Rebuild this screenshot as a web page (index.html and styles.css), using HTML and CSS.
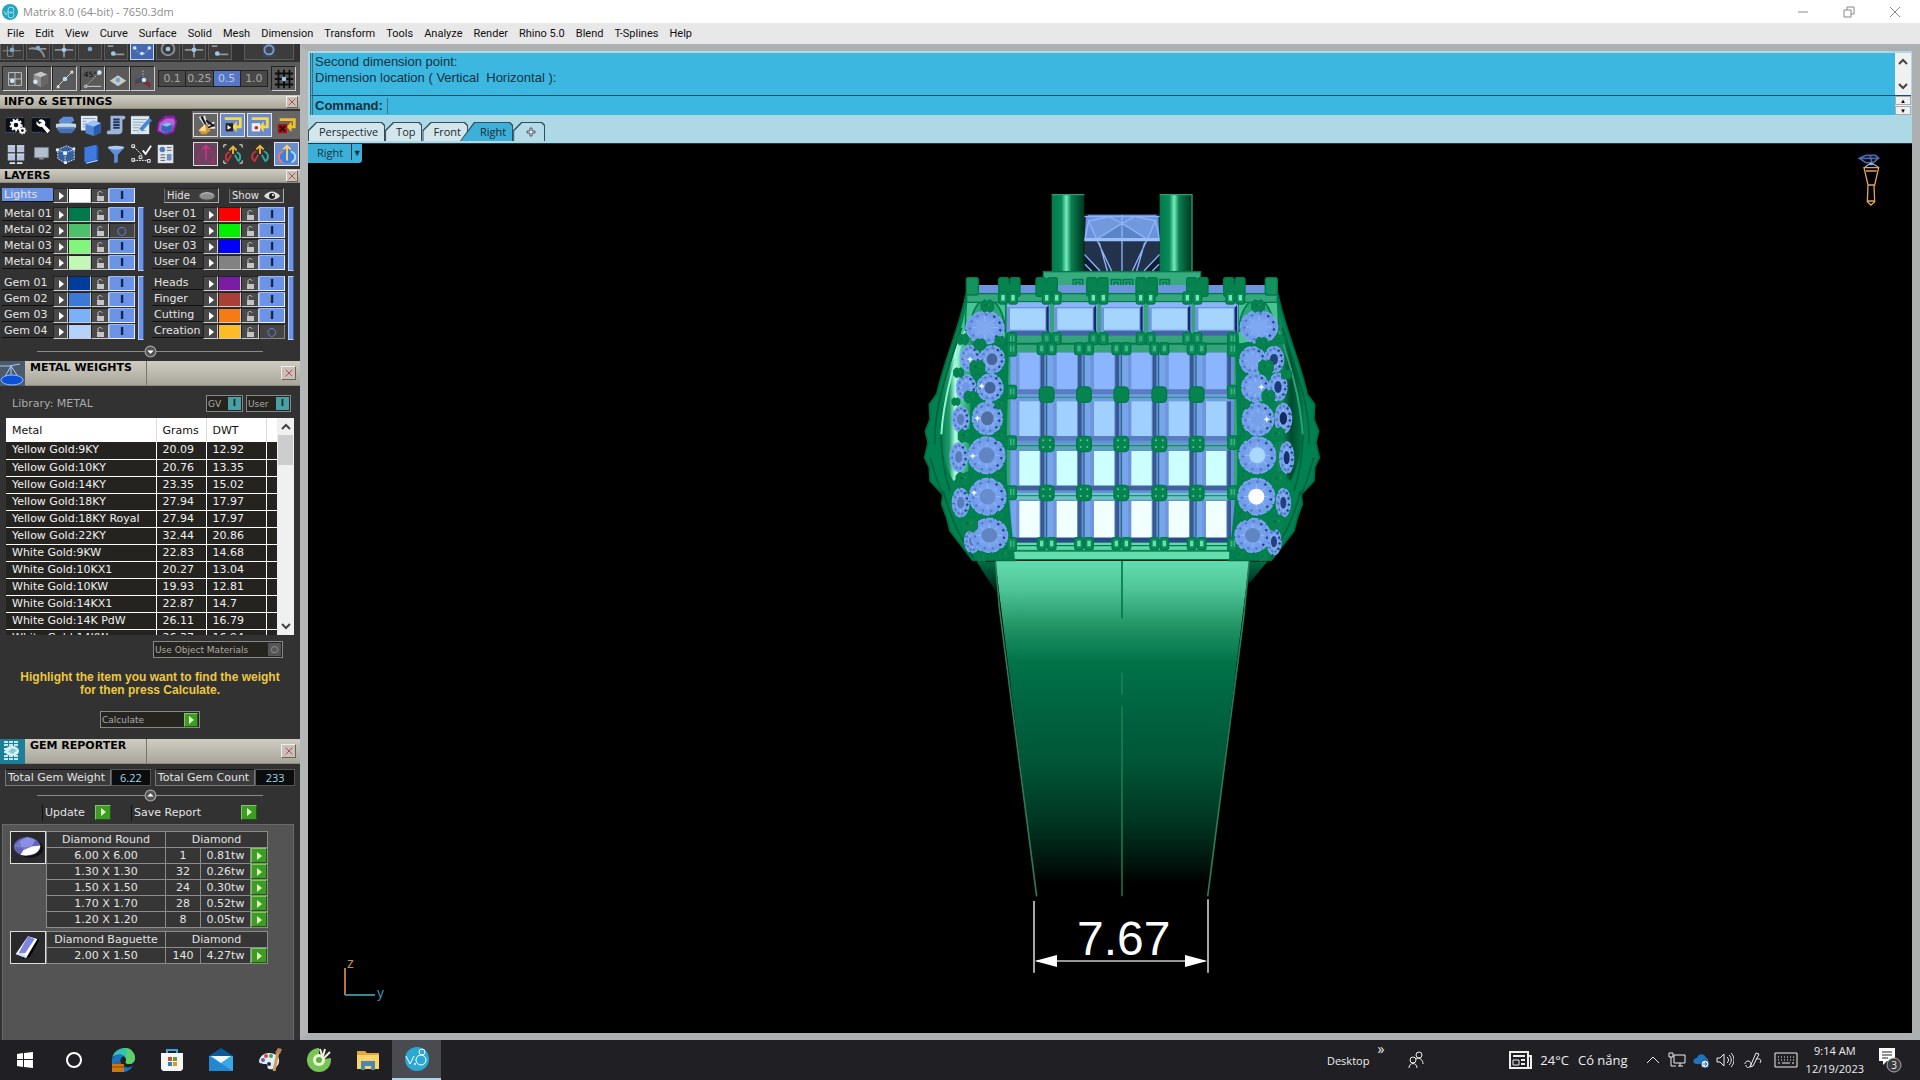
FILE: index.html
```html
<!DOCTYPE html>
<html lang="en">
<head>
    <meta charset="UTF-8">
    <meta name="viewport" content="width=device-width, initial-scale=1">
    <title>Matrix 8.0 (64-bit) - 7650.3dm</title>
    <link rel="stylesheet" href="styles.css">
</head>
<body>

<!-- icon sprite -->
<svg class="sprite" aria-hidden="true">
    <symbol id="i-grid4" viewBox="0 0 24 24"><path d="M5 5h14v14H5zM12 5v14M5 12h14" fill="none" stroke="#c9c9c9"/><circle cx="9" cy="14" r="2.5" fill="#cde6f7"/></symbol>
    <symbol id="i-box" viewBox="0 0 24 24"><path d="M5 7l8-3 7 3v10l-7 4-8-4z" fill="#8d8d8d"/><path d="M5 7l8-3 7 3-7 3z" fill="#c5c5c5"/><path d="M13 10l7-3v10l-7 4z" fill="#666"/><circle cx="7" cy="15" r="2.5" fill="#cde6f7"/></symbol>
    <symbol id="i-line" viewBox="0 0 24 24"><path d="M4 20L20 4" stroke="#ddd"/><path d="M3 19h3v3H3zM18 3h3v3h-3z" fill="#ddd"/><circle cx="12" cy="12" r="2.5" fill="#b8dcf4"/></symbol>
    <symbol id="i-plane" viewBox="0 0 24 24"><path d="M3 14l9-6 9 6-9 6z" fill="#c9cac4"/><circle cx="12" cy="13" r="2.5" fill="#6aa6d4"/></symbol>
    <symbol id="i-planes" viewBox="0 0 24 24"><path d="M12 3v10" stroke="#fff" stroke-dasharray="1 2"/><path d="M13 13l7 3v6l-8-6zM4 13l8-2v4l-9 3z" fill="#7c2f34"/><path d="M3 13l9-4 3 4-10 3z" fill="#384a6c"/><circle cx="13" cy="13" r="2.5" fill="#cde6f7"/></symbol>
    <symbol id="i-hash" viewBox="0 0 24 24"><path d="M6 2v20M12 2v20M18 2v20M2 6h20M2 12h20M2 18h20" stroke="#0c0c0c" stroke-width="2"/><circle cx="12" cy="12" r="2.5" fill="#9ccbe8"/></symbol>

    <symbol id="i-s1" viewBox="0 0 24 24"><path d="M2 15h20M7 10v11h6V4" fill="none" stroke="#8f9296"/><circle cx="12" cy="14" r="2.5" fill="#7fa9c9"/></symbol>
    <symbol id="i-s2" viewBox="0 0 24 24"><path d="M2 13c9-3 15 2 17 9M7 13h14" fill="none" stroke="#8f9296" stroke-width="2"/><circle cx="12" cy="12" r="2.5" fill="#7fa9c9"/></symbol>
    <symbol id="i-s3" viewBox="0 0 24 24"><path d="M2 14h20M12 3v19" stroke="#8f9296" stroke-width="2"/><circle cx="12" cy="14" r="2.5" fill="#9ccbe8"/></symbol>
    <symbol id="i-s4" viewBox="0 0 24 24"><circle cx="12" cy="13" r="2.5" fill="#7fa9c9"/></symbol>
    <symbol id="i-s5" viewBox="0 0 24 24"><path d="M3 10h6M7 19h14" stroke="#8f9296" stroke-width="2"/><circle cx="9" cy="18" r="2.5" fill="#9ccbe8"/></symbol>
    <symbol id="i-s6" viewBox="0 0 24 24"><path d="M4 10c4 12 12 12 16 0" fill="none" stroke="#cfe0ff" stroke-dasharray="1 2"/><circle cx="4" cy="12" r="2" fill="#cde6f7"/><circle cx="12" cy="18" r="2" fill="#cde6f7"/><circle cx="20" cy="12" r="2" fill="#cde6f7"/></symbol>
    <symbol id="i-s7" viewBox="0 0 24 24"><circle cx="12" cy="13" r="7" fill="none" stroke="#8f9296" stroke-width="2"/><circle cx="12" cy="13" r="2.5" fill="#9ccbe8"/></symbol>
    <symbol id="i-s8" viewBox="0 0 24 24"><path d="M5 2h14v20H5z" fill="#3c4654"/><circle cx="12" cy="14" r="5" fill="none" stroke="#7c9cd4" stroke-width="2"/></symbol>

    <symbol id="i-gears" viewBox="0 0 24 24"><path d="M1 4h20v16H1z" fill="#0a0d14"/><path d="M1 4h20M1 20h12" stroke="#5b7fc9" stroke-dasharray="1 1"/><circle cx="12" cy="12" r="4" fill="none" stroke="#fff" stroke-width="3"/><circle cx="12" cy="12" r="6" fill="none" stroke="#fff" stroke-width="2" stroke-dasharray="2 2"/><circle cx="19" cy="18" r="2.5" fill="none" stroke="#fff" stroke-width="2"/><circle cx="19" cy="18" r="4" fill="none" stroke="#fff" stroke-dasharray="1 2"/></symbol>
    <symbol id="i-wrench" viewBox="0 0 24 24"><path d="M2 4h20v16H2z" fill="#0a0d14"/><path d="M2 4h20M2 20h12" stroke="#5b7fc9" stroke-dasharray="1 1"/><path d="M9 8a4 4 0 0 1 7 4l6 6-3 3-6-7a5 5 0 0 1-6-6l3 3 3-2z" fill="#fff"/></symbol>
    <symbol id="i-layers" viewBox="0 0 24 24"><path d="M4 7l5-4h10l2 4-4 3H5z" fill="#5f8fd8"/><path d="M2 17l4-4h13l3 4-4 4H6z" fill="#4470b5"/><path d="M1 11l5-1h12l5 1v4H1z" fill="#c7d7ec"/><path d="M2 14h20v2H2z" fill="#6b8db8"/></symbol>
    <symbol id="i-cubedoc" viewBox="0 0 24 24"><path d="M1 2h18v16H1z" fill="#dfe9f5"/><path d="M3 5h14M3 8h4M3 11h3M3 14h3" stroke="#7c98c2"/><path d="M6 11l9-4 8 3v10l-8 4-9-3z" fill="#4f86d8"/><path d="M6 11l9-4 8 3-8 4z" fill="#9cc4f5"/><path d="M15 14l8-4v10l-8 4z" fill="#2c5cae"/></symbol>
    <symbol id="i-scroll" viewBox="0 0 24 24"><path d="M6 2h14c3 0 3 4 0 4h-1v12c0 3-2 4-4 4H3c-2-1-1-4 1-4h2z" fill="#9fb4da"/><path d="M9 6h7M9 9h7M9 12h7M9 15h7" stroke="#20355f" stroke-width="2"/></symbol>
    <symbol id="i-note" viewBox="0 0 24 24"><path d="M1 2h20v20H1z" fill="#dce9f2"/><path d="M3 6h15M3 9h13M3 12h9M3 15h7M3 18h14" stroke="#8ba0b5"/><path d="M1 2h20" stroke="#333" stroke-dasharray="1 1"/><path d="M21 4l3 3-11 12-5 2 2-5z" fill="#4d86d0"/><path d="M10 16l3 3-5 2z" fill="#f0e6cf"/></symbol>
    <symbol id="i-gem" viewBox="0 0 24 24"><path d="M3 9l8-7h10l3 6-3 12-9 3-10-4z" fill="#8d1fa8"/><path d="M5 10l7-5h8l2 4-3 9-8 3-7-3z" fill="#b763d4"/><path d="M7 12l6-3 6 2v6l-6 4-6-3z" fill="#3567b9"/><path d="M7 12l6-3 6 2-6 3z" fill="#8bb9f0"/></symbol>
    <symbol id="i-quad" viewBox="0 0 24 24"><path d="M3 3h8v7H3zM13 3h8v7h-8zM3 12h8v7H3zM13 12h8v7h-8z" fill="#b4c4dc"/><path d="M3 3h8M13 3h8M3 12h8M13 12h8" stroke="#f2f6ff"/><path d="M5 22h6M13 22h6" stroke="#dfe6f2" stroke-width="2"/></symbol>
    <symbol id="i-monitor" viewBox="0 0 24 24"><path d="M5 5h15v11H5z" fill="#b4bfce" stroke="#7d8794"/><path d="M10 16h5v2h-5z" fill="#8b93a0"/></symbol>
    <symbol id="i-cubewire" viewBox="0 0 24 24"><path d="M3 7l10-4 8 4v11l-10 4-8-5z" fill="#35619e"/><path d="M3 7l10-4 8 4v11l-10 4-8-5zM3 7l8 4 10-4M11 11v11" fill="none" stroke="#dce8ff" stroke-dasharray="2 1"/><path d="M9 9h4v4H9zM1 6h3v3H1zM19 5h3v3h-3zM10 20h3v3h-3z" fill="#e9f1ff"/></symbol>
    <symbol id="i-book" viewBox="0 0 24 24"><path d="M5 5l13-3 2 2v16l-13 3-2-2z" fill="#2458b5"/><path d="M5 5l13-3v16L5 21z" fill="#3f7ae0"/><path d="M7 22l12-3" stroke="#e8f0ff"/></symbol>
    <symbol id="i-funnel" viewBox="0 0 24 24"><path d="M3 5h18l-7 8v8l-4 1v-9z" fill="#5d8fd6"/><ellipse cx="12" cy="5" rx="9" ry="2" fill="#a9c8f2"/></symbol>
    <symbol id="i-nodes" viewBox="0 0 24 24"><path d="M4 4l9 9M4 19h15" fill="none" stroke="#fff" stroke-dasharray="2 1"/><path d="M2 2h3v3H2zM2 17h3v3H2zM19 18h3v3h-3zM10 14h3v3h-3z" fill="none" stroke="#fff"/><path d="M14 8l3 4 6-9" fill="none" stroke="#fff" stroke-width="2"/></symbol>
    <symbol id="i-report" viewBox="0 0 24 24"><path d="M3 2h17v20H3z" fill="#dfe6ee"/><circle cx="8" cy="7" r="3" fill="#4d79b8"/><path d="M13 5h5M13 8h5M6 13h5M6 16h5M6 19h5" stroke="#556"/><path d="M13 12h5v7h-5z" fill="#6e8fc0"/></symbol>
    <symbol id="i-burst" viewBox="0 0 24 24"><path d="M5 3l6 9M10 2l3 10M21 9l-7 5M22 15l-8 0" stroke="#e8e8e8" stroke-width="2"/><path d="M7 3l5 9M12 7l7 5M21 12l-7 3" stroke="#111" stroke-width="2"/><path d="M4 18l7-7 6 7-5 4H7z" fill="#dc9430"/><path d="M4 18l7-7 1 8z" fill="#ffe0a0"/></symbol>
    <symbol id="i-play" viewBox="0 0 24 24"><path d="M3 5h17v9h-5" fill="none" stroke="#f5d94b" stroke-width="3"/><path d="M16 8v12l-5-6z" fill="#f5d94b"/><path d="M4 10h8v9H4z" fill="#222"/><path d="M6 12v5l4-2z" fill="#fff"/></symbol>
    <symbol id="i-rec" viewBox="0 0 24 24"><path d="M3 5h17v9h-5" fill="none" stroke="#f5d94b" stroke-width="3"/><path d="M16 8v12l-5-6z" fill="#f5d94b"/><path d="M3 10h9v9H3z" fill="#eee"/><circle cx="8" cy="15" r="2" fill="#c22"/></symbol>
    <symbol id="i-stop" viewBox="0 0 24 24"><path d="M4 6h16v8h-4" fill="none" stroke="#f1c21f" stroke-width="3"/><path d="M17 8v12l-5-6z" fill="#f1c21f"/><path d="M2 11h10v10H2z" fill="#a11"/><path d="M4 13l6 6M10 13l-6 6" stroke="#300" stroke-width="2"/></symbol>
    <symbol id="i-orbit1" viewBox="0 0 24 24"><path d="M12 19V4M8 7l4-4 4 4" fill="none" stroke="#c8327a" stroke-width="2"/><path d="M9 9c-7 2-7 10-2 13M15 9c7 2 7 9 3 12M20 16v6h-5" fill="none" stroke="#b82b60"/></symbol>
    <symbol id="i-orbit2" viewBox="0 0 24 24"><path d="M2 5V2h3M19 2h3v3M2 19v3h3M19 22h3v-3" fill="none" stroke="#fff"/><path d="M12 12V4M8 8l4-4 4 4" fill="none" stroke="#f0b63c" stroke-width="2"/><path d="M8 10c-5 2-5 8-1 10M10 13l-4 7" fill="none" stroke="#c8323e" stroke-width="2"/><path d="M16 10c5 2 5 8 1 10M14 13l4 7" fill="none" stroke="#29b0a6" stroke-width="2"/></symbol>
    <symbol id="i-orbit3" viewBox="0 0 24 24"><path d="M12 12V4M8 7l4-4 4 4" fill="none" stroke="#f0b63c" stroke-width="2"/><path d="M8 9c-6 2-6 9-1 11M10 13l-4 7" fill="none" stroke="#c8323e" stroke-width="2"/><path d="M16 9c6 2 6 9 1 11M14 13l4 7" fill="none" stroke="#29b0a6" stroke-width="2"/></symbol>
    <symbol id="i-orbit4" viewBox="0 0 24 24"><circle cx="12" cy="14" r="8" fill="#3d7fe0"/><path d="M12 19V4M8 7l4-4 4 4" fill="none" stroke="#ffd36a" stroke-width="2"/><path d="M8 9c-7 3-6 10-1 12" fill="none" stroke="#ef7a6c" stroke-width="2"/><path d="M16 9c7 3 6 10 1 12" fill="none" stroke="#a7e6ff" stroke-width="2"/></symbol>

    <symbol id="i-lock" viewBox="0 0 12 12"><path d="M3 6h7v5H3z" fill="#c4c4c4"/><path d="M4 6V3c0-2 4-2 4 0" fill="none" stroke="#c4c4c4"/></symbol>
    <symbol id="i-close" viewBox="0 0 12 12"><path d="M2 2l8 8M10 2l-8 8" stroke="#a23d3d"/></symbol>
    <symbol id="i-tri" viewBox="0 0 12 12"><path d="M4 2l5 4-5 4z" fill="currentColor"/></symbol>
    <symbol id="i-up" viewBox="0 0 12 12"><path d="M2 8l4-4 4 4" fill="none" stroke="#444" stroke-width="2"/></symbol>
    <symbol id="i-down" viewBox="0 0 12 12"><path d="M2 4l4 4 4-4" fill="none" stroke="#444" stroke-width="2"/></symbol>
</svg>

<div class="window">
    <header class="titlebar">
        <svg class="app-icon" viewBox="0 0 16 16"><circle cx="8" cy="8" r="8" fill="#27a3bd"/><circle cx="9" cy="6" r="3" fill="none" stroke="#8fe0ee"/><circle cx="9" cy="11" r="3" fill="none" stroke="#8fe0ee"/><path d="M2 7l2 4 2-4" fill="none" stroke="#8fe0ee"/></svg>
        <span class="title">Matrix 8.0 (64-bit) - 7650.3dm</span>
        <button class="win-btn" aria-label="Minimize"><svg viewBox="0 0 12 12"><path d="M1 6h10" stroke="#888"/></svg></button>
        <button class="win-btn" aria-label="Restore"><svg viewBox="0 0 12 12"><path d="M1 4h7v7H1zM4 4V1h7v7H8" fill="none" stroke="#888"/></svg></button>
        <button class="win-btn" aria-label="Close"><svg viewBox="0 0 12 12"><path d="M1 1l10 10M11 1L1 11" stroke="#888"/></svg></button>
    </header>

    <nav class="menubar">
        <a href="#">File</a><a href="#">Edit</a><a href="#">View</a><a href="#">Curve</a><a href="#">Surface</a><a href="#">Solid</a><a href="#">Mesh</a><a href="#">Dimension</a><a href="#">Transform</a><a href="#">Tools</a><a href="#">Analyze</a><a href="#">Render</a><a href="#">Rhino 5.0</a><a href="#">Blend</a><a href="#">T-Splines</a><a href="#">Help</a>
    </nav>

    <div class="workspace">
        <aside class="sidebar">
            <div class="snaps">
                <button aria-label="Snap end"><svg><use href="#i-s1"/></svg></button>
                <button aria-label="Snap near"><svg><use href="#i-s2"/></svg></button>
                <button aria-label="Snap intersection"><svg><use href="#i-s3"/></svg></button>
                <button aria-label="Snap point"><svg><use href="#i-s4"/></svg></button>
                <button aria-label="Snap perpendicular"><svg><use href="#i-s5"/></svg></button>
                <button class="on" aria-label="Snap quad"><svg><use href="#i-s6"/></svg></button>
                <button aria-label="Snap center"><svg><use href="#i-s7"/></svg></button>
                <button aria-label="Snap mid"><svg><use href="#i-s3"/></svg></button>
                <button aria-label="Snap tangent"><svg><use href="#i-s5"/></svg></button>
                <button class="wide" aria-label="Disable snaps"><svg><use href="#i-s8"/></svg></button>
            </div>
            <div class="modes">
                <div class="mode-set">
                    <button aria-label="Grid snap"><svg><use href="#i-grid4"/></svg></button>
                    <button aria-label="Object snap"><svg><use href="#i-box"/></svg></button>
                    <button aria-label="Smart track"><svg><use href="#i-line"/></svg></button>
                </div>
                <div class="mode-set">
                    <button aria-label="Ortho"><svg viewBox="0 0 24 24"><path d="M4 20L19 5" stroke="#fff" stroke-dasharray="1 2"/><path d="M5 20h16" stroke="#ddd"/><circle cx="4" cy="20" r="1.5" fill="none" stroke="#ddd"/><circle cx="19" cy="5" r="2.5" fill="#cde6f7"/><text x="2" y="10" class="icon-text">45°</text></svg></button>
                    <button aria-label="Planar"><svg><use href="#i-plane"/></svg></button>
                    <button aria-label="Project"><svg><use href="#i-planes"/></svg></button>
                </div>
                <div class="steps">
                    <button>0.1</button><button>0.25</button><button class="on">0.5</button><button>1.0</button>
                </div>
                <div class="mode-set">
                    <button aria-label="Show grid"><svg><use href="#i-hash"/></svg></button>
                </div>
            </div>

            <div class="head"><h2>INFO &amp; SETTINGS</h2><button class="x" aria-label="Close"><svg><use href="#i-close"/></svg></button></div>
            <div class="tools">
                <div class="tool-row">
                    <button aria-label="Settings"><svg><use href="#i-gears"/></svg></button>
                    <button aria-label="Tools"><svg><use href="#i-wrench"/></svg></button>
                    <button aria-label="Layers"><svg><use href="#i-layers"/></svg></button>
                    <button aria-label="Object info"><svg><use href="#i-cubedoc"/></svg></button>
                    <button aria-label="History"><svg><use href="#i-scroll"/></svg></button>
                    <button aria-label="Notes"><svg><use href="#i-note"/></svg></button>
                    <button aria-label="Gem info"><svg><use href="#i-gem"/></svg></button>
                    <div class="tool-set lit">
                        <button class="raised" aria-label="Explode"><svg><use href="#i-burst"/></svg></button>
                        <button class="blue" aria-label="Play"><svg><use href="#i-play"/></svg></button>
                        <button class="blue" aria-label="Record"><svg><use href="#i-rec"/></svg></button>
                        <button aria-label="Clear"><svg><use href="#i-stop"/></svg></button>
                    </div>
                </div>
                <div class="tool-row">
                    <button aria-label="Four views"><svg><use href="#i-quad"/></svg></button>
                    <button aria-label="Display"><svg><use href="#i-monitor"/></svg></button>
                    <button aria-label="Bounding box"><svg><use href="#i-cubewire"/></svg></button>
                    <button aria-label="Library"><svg><use href="#i-book"/></svg></button>
                    <button aria-label="Filter"><svg><use href="#i-funnel"/></svg></button>
                    <button aria-label="Check"><svg><use href="#i-nodes"/></svg></button>
                    <button aria-label="Report"><svg><use href="#i-report"/></svg></button>
                    <div class="tool-set">
                        <button class="raised rose" aria-label="Gumball"><svg><use href="#i-orbit1"/></svg></button>
                        <button aria-label="Gumball box"><svg><use href="#i-orbit2"/></svg></button>
                        <button aria-label="Gumball free"><svg><use href="#i-orbit3"/></svg></button>
                        <button class="raised blue" aria-label="Gumball world"><svg><use href="#i-orbit4"/></svg></button>
                    </div>
                </div>
            </div>

            <div class="head"><h2>LAYERS</h2><button class="x" aria-label="Close"><svg><use href="#i-close"/></svg></button></div>
            <div class="layers">
                <div class="layer-top">
                    <div id="lights"></div>
                    <div class="show-hide">
                        <button>Hide <svg viewBox="0 0 18 10"><ellipse cx="9" cy="5" rx="8" ry="4" fill="#8c8c8c" stroke="#555"/><path d="M3 4c3-3 9-3 12 0" stroke="#ccc" fill="none"/></svg></button>
                        <button>Show <svg viewBox="0 0 18 10"><path d="M1 5c4-6 12-6 16 0-4 5-12 5-16 0z" fill="#ddd"/><circle cx="9" cy="5" r="3" fill="#222"/><circle cx="10" cy="4" r="1" fill="#fff"/></svg></button>
                    </div>
                </div>
                <div class="layer-grid" id="layer-grid"></div>
                <div class="fold"><button aria-label="Collapse"><svg viewBox="0 0 12 12"><circle cx="6" cy="6" r="5" fill="#555" stroke="#aaa"/><path d="M3 5h6L6 8z" fill="#fff"/></svg></button></div>
            </div>

            <div class="head tall">
                <svg class="head-icon" viewBox="0 0 25 25"><path d="M0 0h25v25H0z" fill="#4c5a6c"/><path d="M0 5h9l11-2" stroke="#9fc4ff" fill="none"/><path d="M11 5L3 19M11 5l10 15M11 5v14" stroke="#a9ccff"/><ellipse cx="12" cy="19" rx="11" ry="5" fill="#0c50d8" stroke="#8cc0ff"/></svg>
                <h2>METAL WEIGHTS</h2>
                <button class="x" aria-label="Close"><svg><use href="#i-close"/></svg></button>
            </div>
            <div class="metals">
                <div class="library">
                    <span>Library: METAL</span>
                    <button class="flag">GV <b>I</b></button>
                    <button class="flag">User <b>I</b></button>
                </div>
                <div class="metal-list">
                    <div class="metal-scroll">
                        <table class="metal-table">
                            <thead><tr><th>Metal</th><th>Grams</th><th>DWT</th><th></th></tr></thead>
                            <tbody id="metal-rows"></tbody>
                        </table>
                    </div>
                    <div class="scrollbar">
                        <svg><use href="#i-up"/></svg>
                        <div class="thumb"></div>
                        <svg><use href="#i-down"/></svg>
                    </div>
                </div>
                <button class="opt">Use Object Materials <i>○</i></button>
                <p class="hint">Highlight the item you want to find the weight<br>for then press Calculate.</p>
                <button class="calc">Calculate <span class="go"><svg><use href="#i-tri"/></svg></span></button>
            </div>

            <div class="head tall">
                <svg class="head-icon" viewBox="0 0 25 25"><path d="M0 0h25v25H0z" fill="#1c7f97"/><path d="M4 3h14M4 6h14M4 17h14M4 20h14M4 10h3M4 13h3" stroke="#bfeaf2" stroke-width="2" stroke-dasharray="4 1"/><ellipse cx="12" cy="12" rx="7" ry="5" fill="#d9f2f7"/><path d="M8 13l4-4 5 2-4 4z" fill="#86c8d8"/></svg>
                <h2>GEM REPORTER</h2>
                <button class="x" aria-label="Close"><svg><use href="#i-close"/></svg></button>
            </div>
            <div class="gems">
                <div class="totals">
                    <label for="gem-weight">Total Gem Weight</label><input id="gem-weight" value="6.22" readonly>
                    <label for="gem-count" class="second">Total Gem Count</label><input id="gem-count" value="233" readonly>
                </div>
                <div class="fold"><button aria-label="Expand"><svg viewBox="0 0 12 12"><circle cx="6" cy="6" r="5" fill="#555" stroke="#aaa"/><path d="M3 7h6L6 4z" fill="#fff"/></svg></button></div>
                <div class="actions">
                    <button>Update <span class="go"><svg><use href="#i-tri"/></svg></span></button>
                    <button class="save">Save Report <span class="go"><svg><use href="#i-tri"/></svg></span></button>
                </div>
            </div>
            <div class="gem-panel">
                <div class="gem-block">
                    <svg class="gem-pic" viewBox="0 0 36 32"><ellipse cx="20" cy="17" rx="14" ry="10" fill="#111"/><ellipse cx="17" cy="15" rx="14" ry="10" fill="#5f63b4"/><path d="M9 9l8-4 9 3-4 7-11 1z" fill="#8c90e4"/><path d="M3 15l6-6 2 7zM11 16l11-1-6 5z" fill="#777bc9"/><path d="M10 24l3-5 9-4 9-1c0 6-7 12-21 10z" fill="#fff"/></svg>
                    <table class="gem-table">
                        <colgroup><col class="c-size"><col class="c-count"><col class="c-weight"><col class="c-go"></colgroup>
                        <thead><tr><th>Diamond Round</th><th colspan="3">Diamond</th></tr></thead>
                        <tbody id="round-rows"></tbody>
                    </table>
                </div>
                <div class="gem-block">
                    <svg class="gem-pic" viewBox="0 0 36 32"><path d="M12 28l8-2 10-18-3-2z" fill="#000"/><path d="M5 23L18 4l10 3-12 20z" fill="#fff"/><path d="M8 22L18 4l7 3-10 15z" fill="#7f84e2"/><path d="M5 23l3-1 7 2 1 3z" fill="#cde"/></svg>
                    <table class="gem-table">
                        <colgroup><col class="c-size"><col class="c-count"><col class="c-weight"><col class="c-go"></colgroup>
                        <thead><tr><th>Diamond Baguette</th><th colspan="3">Diamond</th></tr></thead>
                        <tbody id="baguette-rows"></tbody>
                    </table>
                </div>
            </div>
        </aside>

        <main class="stage">
            <section class="command">
                <div class="history">
                    <p>Second dimension point:<br>Dimension location ( Vertical&nbsp; Horizontal ):</p>
                    <div class="scrollbar short"><svg><use href="#i-up"/></svg><svg><use href="#i-down"/></svg></div>
                </div>
                <div class="prompt">
                    <label for="cmd">Command:</label>
                    <input id="cmd" type="text">
                    <div class="spin">
                        <button aria-label="Previous">▲</button>
                        <button aria-label="Next">▼</button>
                    </div>
                </div>
            </section>
            <div class="tabs">
                <button>Perspective</button><button>Top</button><button>Front</button><button class="active">Right</button><button aria-label="Add view"><svg viewBox="0 0 10 10"><path d="M4 1h2v3h3v2H6v3H4V6H1V4h3z" fill="#eef" stroke="#456"/></svg></button>
            </div>
            <div class="viewport">
                <button class="view-name">Right <span>▼</span></button>
                <svg class="scene" viewBox="308 143 1604 889" preserveAspectRatio="xMidYMid meet">
                    <defs>
                        <linearGradient id="post"><stop offset="0" stop-color="#00794b"/><stop offset=".3" stop-color="#0b8a5a"/><stop offset=".45" stop-color="#74edb9"/><stop offset=".6" stop-color="#0a7e50"/><stop offset="1" stop-color="#00331f"/></linearGradient>
                        <linearGradient id="band" x2="0" y2="1"><stop offset="0" stop-color="#62dcae"/><stop offset=".08" stop-color="#50c698"/><stop offset=".2" stop-color="#209264"/><stop offset=".3" stop-color="#007349"/><stop offset=".42" stop-color="#006641"/><stop offset=".6" stop-color="#005637"/><stop offset=".78" stop-color="#003522"/><stop offset=".9" stop-color="#00150d"/><stop offset=".96" stop-color="#000"/></linearGradient>
                        <linearGradient id="fade" x2="0" y2="1"><stop offset="0" stop-color="#006b43"/><stop offset="1" stop-color="#001a10"/></linearGradient>
                        <linearGradient id="lit"><stop offset="0" stop-color="#00794b"/><stop offset=".25" stop-color="#1f9a6a"/><stop offset=".42" stop-color="#b4ffe8"/><stop offset=".6" stop-color="#4cc797"/><stop offset="1" stop-color="#00794b"/></linearGradient>
                        <linearGradient id="shade"><stop offset="0" stop-color="#00794b"/><stop offset=".35" stop-color="#004a2e"/><stop offset=".6" stop-color="#12895a"/><stop offset="1" stop-color="#00794b"/></linearGradient>
                        <radialGradient id="stone"><stop offset="0" stop-color="#88b0f5"/><stop offset="1" stop-color="#6b98e8"/></radialGradient>
                    </defs>

                    <!-- shank -->
                    <g transform="translate(940 540) scale(.33333)">
                        <path d="M110 62L170 155V62zM982 62L925 130V62z" fill="url(#fade)"/>
                        <path d="M166 60H928L803 1066H290z" fill="url(#band)"/>
                        <path d="M166 60L178 200 290 1066M928 60L912 220 803 1066" fill="none" stroke="#2a7a58" stroke-width="5"/>
                        <path d="M546 60V232" stroke="#007a4d" stroke-width="5"/>
                        <path d="M546 395V460M546 495V1066" stroke="#23855c" stroke-width="4"/>
                        <path d="M282 1080V1295M804 1075V1295M290 1260H795" stroke="#c8c8c8" stroke-width="5"/>
                        <path d="M284 1260L351 1242V1278zM802 1260L735 1242V1278z" fill="#fff"/>
                    </g>
                    <text x="1077" y="954" class="dim">7.67</text>

                    <!-- head, filled in by script.js -->
                    <g id="ring" transform="translate(900 170) scale(.33333)"></g>

                    <!-- axis -->
                    <path d="M345 967V994" stroke="#b5773a" stroke-width="2"/>
                    <path d="M345 994H375" stroke="#3a8794" stroke-width="2"/>
                    <text x="347" y="967" class="axis axis-z">z</text>
                    <text x="377" y="997" class="axis axis-y">y</text>

                    <!-- orientation marker -->
                    <g transform="translate(1760 0) scale(.33333)" fill="none" stroke-width="4">
                        <path d="M298 472l20-9h28l10 8-16 14h-22zM298 472h56M330 463l6 22" stroke="#4a67ad" stroke-width="5"/>
                        <path d="M333 485v8M315 498l18-12 22 12" stroke="#9fb0c8"/>
                        <path d="M312 500h44l-12 52h-20zM318 510h32M324 552l-2 50 11 10 11-10-2-50M322 600h22" stroke="#e0a25c"/>
                    </g>
                </svg>
            </div>
        </main>
    </div>

    <footer class="taskbar">
        <button class="task" aria-label="Start"><svg viewBox="0 0 24 24"><path d="M4 6l6-1v6H4zM11 5l9-1v7h-9zM4 12h6v7l-6-1zM11 12h9v8l-9-1z" fill="#fff"/></svg></button>
        <button class="task" aria-label="Search"><svg viewBox="0 0 24 24"><circle cx="12" cy="12" r="7" fill="none" stroke="#fff" stroke-width="2"/></svg></button>
        <button class="task" aria-label="Edge"><svg viewBox="0 0 24 24"><path d="M1 10C3 2 10 0 14 0c6 0 10 5 10 10 0 4-3 6-6 6s-4-1-3-3c1-3-3-7-8-6-3 0-5 1-6 3z" fill="#35c3b0"/><path d="M14 0c6 0 10 5 10 10 0 4-3 6-6 6s-4-1-3-3c0-5 3-10-1-13z" fill="#5fd068"/><path d="M1 11c2-5 9-6 12-3-5 1-5 9 1 11 3 1 6 0 8-1-3 5-9 7-13 6C3 23 0 17 1 11z" fill="#1673c9"/><path d="M1 16h12v8H1z" fill="#c9790f"/><path d="M5 16v-2h4v2M1 19h12" fill="none" stroke="#8a4b07"/></svg></button>
        <button class="task" aria-label="Store"><svg viewBox="0 0 24 24"><path d="M7 6V2h10v4" fill="none" stroke="#3ba4df" stroke-width="2"/><path d="M1 5h22v16l-2 2H3l-2-2z" fill="#f5f5f5"/><path d="M8 9h4v4H8z" fill="#c8502d"/><path d="M13 9h4v4h-4z" fill="#6d9a2d"/><path d="M8 14h4v4H8z" fill="#2d83b8"/><path d="M13 14h4v4h-4z" fill="#d99a26"/></svg></button>
        <button class="task" aria-label="Mail"><svg viewBox="0 0 24 24"><path d="M0 8l12-8 12 8v4H0z" fill="#0c5a9e"/><path d="M0 8h24v15H0z" fill="#36a9ea"/><path d="M0 8l24 15H0z" fill="#2388d0"/><path d="M2 8h20l-10 7z" fill="#eef7fd"/></svg></button>
        <button class="task" aria-label="Paint"><svg viewBox="0 0 24 24"><path d="M11 5c7 0 11 4 10 9-1 6-7 8-10 7-3-1 0-4-3-5-3 0-7 0-7-3 1-5 5-8 10-8z" fill="#dfeef7"/><circle cx="5" cy="12" r="2" fill="#6b57b5"/><circle cx="8" cy="8" r="2" fill="#d44"/><circle cx="13" cy="8" r="2" fill="#4aa04a"/><circle cx="11" cy="16" r="2" fill="#234"/><path d="M20 4l-4 19" stroke="#d19a5c" stroke-width="3"/><path d="M17 5l3-5 4 1-2 5z" fill="#b78458"/></svg></button>
        <button class="task" aria-label="Coc Coc"><svg viewBox="0 0 24 24"><circle cx="12" cy="12" r="12" fill="#79c554"/><path d="M12 0h12v10l-7 1-5-5z" fill="#202226"/><circle cx="12" cy="12" r="6" fill="#e9f7df"/><circle cx="12" cy="12" r="3" fill="#5fae3c"/><path d="M13 1l2 6M18 1l-2 7M23 4l-6 6" stroke="#f3ece0" stroke-width="2"/></svg></button>
        <button class="task" aria-label="File Explorer"><svg viewBox="0 0 24 24"><path d="M1 3h8l2 2h12v16H1z" fill="#e2a93a"/><path d="M1 7h22v14H1z" fill="#fbd468"/><path d="M5 13h14v9h-4v-4H9v4H5z" fill="#4d87ad"/></svg></button>
        <button class="task active" aria-label="Matrix 8.0"><svg viewBox="0 0 24 24"><circle cx="12" cy="12" r="12" fill="#2ba9d3"/><circle cx="17" cy="5" r="3" fill="none" stroke="#fff"/><circle cx="16" cy="13" r="5" fill="none" stroke="#fff"/><path d="M1 9l4 8 4-8" fill="none" stroke="#fff"/><circle cx="10" cy="17" r="1" fill="#fff"/></svg></button>

        <div class="tray">
            <span class="desk">Desktop</span><span class="more">»</span>
            <svg class="people" viewBox="0 0 16 20"><circle cx="11" cy="5" r="3" fill="none" stroke="#eee"/><circle cx="5" cy="10" r="3" fill="none" stroke="#eee"/><path d="M1 18c0-6 8-6 8 0M8 9c4-2 7 1 7 5" fill="none" stroke="#eee"/></svg>
            <svg class="news" viewBox="0 0 24 20"><path d="M2 2h18v16H2zM20 6h3v12h-3" fill="none" stroke="#eee" stroke-width="2"/><path d="M5 6h12M13 10h4M13 14h4" stroke="#eee" stroke-width="2"/><path d="M5 10h6v5H5z" fill="none" stroke="#eee"/></svg>
            <span class="weather">24°C</span><span class="weather">Có nắng</span>
            <svg class="caret" viewBox="0 0 14 14"><path d="M1 10l6-6 6 6" fill="none" stroke="#eee"/></svg>
            <svg viewBox="0 0 18 18"><path d="M6 4h11v8H6zM10 15h5M12 12v3M1 2h4v4H1zM3 6v9h5" fill="none" stroke="#eee"/></svg>
            <svg viewBox="0 0 18 18"><path d="M2 12c-2-3 1-5 3-5 1-5 8-5 9 0 3 0 3 5 1 6H4z" fill="#1a74c0"/><circle cx="13" cy="13" r="4" fill="#ddeefa" stroke="#246"/><path d="M11 13h4M13 11l2 2-2 2" fill="none" stroke="#1a74c0"/></svg>
            <svg viewBox="0 0 18 18"><path d="M1 7h3l4-4v12l-4-4H1zM11 6c2 2 2 4 0 6M13 4c3 3 3 7 0 10M15 2c4 4 4 10 0 14" fill="none" stroke="#eee"/></svg>
            <svg class="pen" viewBox="0 0 18 18"><path d="M1 13c0-4 6-4 6 0s-5 5-5 1M6 16L12 2l3 1-6 12-3 1M12 8c4-1 6 1 4 4" fill="none" stroke="#eee"/></svg>
            <svg class="keys" viewBox="0 0 24 16"><path d="M1 1h22v14H1z" fill="none" stroke="#eee"/><path d="M4 5h16M4 8h16" stroke="#eee" stroke-dasharray="1 2"/><path d="M4 11h2M8 11h8M18 11h2" stroke="#eee"/></svg>
            <time class="clock">9:14 AM<br>12/19/2023</time>
            <button class="notify" aria-label="Notifications"><svg viewBox="0 0 24 28"><path d="M1 2h16v13H9l-4 4v-4H1z" fill="#fff"/><path d="M4 6h10M4 9h10M4 12h6" stroke="#222"/><circle cx="16" cy="19" r="7" fill="#3c3c40" stroke="#aaa"/></svg><b>3</b></button>
        </div>
    </footer>
</div>

<script src="script.js"></script>
</body>
</html>
```
FILE: styles.css
```css
* {
    margin: 0;
    padding: 0;
    box-sizing: border-box;
}

body {
    font-family: "DejaVu Sans", Verdana, sans-serif;
    font-size: 11px;
    color: #e4e4e4;
    background: #000;
}

button, input {
    font: inherit;
    color: inherit;
    background: none;
    border: none;
    outline: none;
}

a {
    color: inherit;
    text-decoration: none;
}

svg {
    display: block;
}

.sprite {
    position: absolute;
    width: 0;
    height: 0;
}

.icon-text {
    font-size: 8px;
    fill: #000;
}

.window {
    display: flex;
    flex-direction: column;
    height: 100vh;
    overflow: hidden;
}

/* title + menu */
.titlebar {
    display: flex;
    align-items: center;
    flex: none;
    height: 23px;
    padding-left: 2px;
    background: #fff;
    color: #8c8c8c;
    font-family: "Open Sans", sans-serif;
}

.app-icon {
    width: 16px;
    height: 16px;
    margin-right: 5px;
}

.title {
    flex: 1;
}

.win-btn {
    width: 46px;
    height: 20px;
}

.win-btn:last-child {
    margin-right: 2px;
}

.win-btn svg {
    width: 12px;
    height: 12px;
    margin: 0 auto;
}

.menubar {
    display: flex;
    align-items: center;
    flex: none;
    height: 21px;
    padding-left: 1px;
    background: #e8e8e8;
    color: #111;
    font-family: Roboto, sans-serif;
}

.menubar a {
    padding: 0 5px 0 6px;
}

.workspace {
    display: flex;
    flex: 1;
    min-height: 0;
}

/* sidebar */
.sidebar {
    display: flex;
    flex-direction: column;
    flex: none;
    width: 300px;
    background: #323232;
}

.snaps {
    display: flex;
    align-items: flex-end;
    gap: 2px;
    flex: none;
    height: 18px;
    padding-bottom: 2px;
    overflow: hidden;
}

.snaps button {
    width: 24px;
    height: 24px;
    background: #3c3c3c;
    border: 1px solid #5c5c5c;
}

.snaps button.on {
    background: #4668b0;
    border-color: #c8d4ec;
}

.snaps .wide {
    flex: 1;
    margin: 0 6px 0 10px;
}

.snaps svg, .mode-set svg {
    width: 22px;
    height: 22px;
    margin: 0 auto;
}

.modes {
    display: flex;
    align-items: center;
    gap: 3px;
    flex: none;
    height: 33px;
    padding: 0 4px 0 2px;
    background: #5a5a5a;
}

.mode-set {
    display: flex;
}

.mode-set button {
    width: 25px;
    height: 25px;
    border: 1px solid #bbb;
    border-color: #222 #ccc #ccc #222;
}

.steps {
    display: flex;
    flex: 1;
    height: 17px;
    border: 1px solid #222;
    border-right: none;
}

.steps button {
    flex: 1;
    background: #484848;
    color: #a8a8a8;
    border-right: 1px solid #222;
}

.steps button.on {
    background: #5577c4;
    color: #bcc8e4;
}

.head {
    display: flex;
    align-items: flex-start;
    flex: none;
    height: 14px;
    padding-left: 4px;
    background: linear-gradient(#cfccc2, #a9a69c);
    border-bottom: 1px solid #8d8a82;
    color: #000;
}

.head h2 {
    flex: 1;
    font-size: 11px;
    line-height: 13px;
    font-weight: bold;
}

.x {
    width: 12px;
    height: 12px;
    margin: 1px 2px 0 0;
    background: #cbbfb8;
    border: 1px solid #776;
    border-color: #eee #665 #665 #eee;
}

.x svg {
    width: 10px;
    height: 10px;
}

.head.tall {
    height: 25px;
    padding-left: 0;
}

.head-icon {
    width: 25px;
    height: 25px;
}

.tall h2 {
    flex: none;
    width: 122px;
    height: 24px;
    padding-left: 5px;
    border-right: 1px solid #77756d;
}

.tall .x {
    width: 15px;
    height: 14px;
    margin: 5px 4px 0 auto;
}

.tall .x svg {
    margin: 0 auto;
}

.tools {
    flex: none;
    padding: 1px 0;
}

.tool-row {
    display: flex;
    align-items: center;
    height: 29px;
    padding-left: 3px;
}

.tool-row button {
    width: 25px;
    height: 24px;
}

.tool-row svg {
    width: 22px;
    height: 22px;
    margin: 0 auto;
}

.tool-set {
    display: flex;
    align-items: center;
    justify-content: space-around;
    flex: 1;
    height: 28px;
    margin-left: 14px;
}

.tool-set.lit {
    background: #666;
}

.raised {
    border: 1px solid #ddd;
}

.tool-row .blue {
    background: #6c8cc8;
    border: 1px solid #dde6fa;
}

.rose {
    background: #6b4260;
}

/* layers */
.layers {
    flex: none;
    height: 178px;
    padding-top: 5px;
}

.layer-top {
    display: flex;
    justify-content: space-between;
    height: 19px;
}

.layer-top .layer {
    padding-left: 2px;
}

.layer-top .name {
    background: #6b93e6;
}

.show-hide {
    display: flex;
    gap: 10px;
    padding-right: 16px;
}

.show-hide button {
    display: flex;
    align-items: center;
    justify-content: space-between;
    width: 55px;
    height: 15px;
    padding: 0 2px;
    font-size: 10px;
    background: #3c3c3c;
    border: 1px solid #222;
    border-color: #222 #aaa #aaa #666;
}

.show-hide svg {
    width: 18px;
    height: 10px;
}

.layer-grid {
    display: grid;
    grid-template-columns: 1fr 1fr;
    row-gap: 5px;
}

.layer-group {
    display: flex;
    gap: 3px;
    padding-left: 2px;
}

.bar {
    width: 6px;
    background: #6b93e6;
    border: 1px solid #b6cbf7;
    border-right-color: #3a5694;
}

.layer {
    display: grid;
    grid-template-columns: 51px 15px 23px 18px 26px;
    height: 16px;
}

.layer .name {
    height: 14px;
    padding-left: 2px;
    line-height: 13px;
    white-space: nowrap;
    border-bottom: 1px solid #111;
}

.layer button, .layer .swatch {
    height: 15px;
    background: #4a4a4a;
    border: 1px solid #ccc;
    border-color: #222 #ccc #ccc #222;
    color: #fff;
}

.layer svg {
    width: 12px;
    height: 12px;
    margin: 0 auto;
}

.layer .toggle {
    background: #6b93e6;
    color: #0b1a3c;
    line-height: 12px;
    font-weight: bold;
    border-color: #9cb8f4 #eee #eee #9cb8f4;
}

.layer .toggle.off {
    background: #444;
    color: #6b93e6;
    font-weight: normal;
    border-color: #222 #888 #888 #222;
}

.fold {
    display: flex;
    justify-content: center;
    height: 14px;
    margin: 4px 37px 0;
    background: linear-gradient(#8a8a8a, #8a8a8a) center / 100% 1px no-repeat;
}

.fold svg {
    width: 13px;
    height: 13px;
}

/* metal weights */
.metals {
    display: flex;
    flex-direction: column;
    flex: none;
    height: 353px;
    padding: 9px 6px 0;
}

.library {
    display: flex;
    align-items: center;
    gap: 3px;
    height: 17px;
    margin-right: 3px;
    font-size: 10px;
    color: #aaa;
}

.library span {
    flex: 1;
    padding-left: 6px;
    font-size: 11px;
}

.flag {
    display: flex;
    justify-content: space-between;
    width: 37px;
    height: 17px;
    padding: 1px;
    line-height: 15px;
    font-size: 9px;
    border: 1px solid #888;
    background: #26241f;
}

.flag:last-child {
    width: 45px;
}

.flag b {
    width: 13px;
    height: 13px;
    line-height: 13px;
    text-align: center;
    background: #4a9fa4;
    color: #0c2a2c;
}

.metal-list {
    display: flex;
    flex: none;
    height: 217px;
    margin-top: 6px;
}

.metal-scroll {
    flex: 1;
    overflow: hidden;
}

.metal-table {
    width: 100%;
    table-layout: fixed;
    border-collapse: collapse;
    background: #24231f;
    color: #f0f0f0;
}

.metal-table th {
    width: 50px;
    height: 24px;
    padding-left: 6px;
    text-align: left;
    font-weight: normal;
    background: #fff;
    color: #111;
    border-right: 1px solid #ddd;
}

.metal-table th:first-child {
    width: 150px;
}

.metal-table th:nth-child(3) {
    width: 60px;
}

.metal-table th:last-child {
    width: auto;
    padding: 0;
    border: none;
}

.metal-table td {
    height: 17px;
    padding-left: 6px;
    line-height: 16px;
    white-space: nowrap;
    border-right: 1px solid #fff;
    border-bottom: 1px solid #fff;
}

.metal-table td:last-child {
    border-right: none;
}

.scrollbar {
    display: flex;
    flex-direction: column;
    width: 17px;
    padding: 3px 0;
    background: #f0f0f0;
}

.scrollbar svg {
    width: 12px;
    height: 12px;
    margin: 0 auto;
}

.scrollbar svg:last-child {
    margin-top: auto;
}

.thumb {
    width: 15px;
    height: 30px;
    margin: 2px auto 0;
    background: #cdcdcd;
}

.opt, .calc {
    display: flex;
    align-items: center;
    justify-content: space-between;
    height: 17px;
    padding: 0 1px;
    font-size: 9px;
    color: #aaa;
    background: #26241f;
    border: 1px solid #888;
}

.opt {
    align-self: flex-end;
    width: 130px;
    margin: 6px 11px 0 0;
}

.opt i {
    width: 13px;
    height: 13px;
    line-height: 12px;
    font-style: normal;
    background: #555;
}

.hint {
    margin-top: 13px;
    text-align: center;
    font-family: "Liberation Sans", Arial, sans-serif;
    font-size: 12px;
    font-weight: bold;
    line-height: 13px;
    white-space: nowrap;
    color: #ecc840;
}

.calc {
    align-self: center;
    width: 100px;
    margin-top: 14px;
}

.go {
    display: block;
    width: 16px;
    height: 15px;
    background: #3f9a26;
    border: 1px solid #1c5a0c;
    border-color: #7cc864 #1c5a0c #1c5a0c #7cc864;
    color: #d8ffb8;
}

.go svg {
    width: 12px;
    height: 12px;
    margin: 0 auto;
}

.calc .go {
    width: 14px;
    height: 14px;
}

/* gem reporter */
.gems {
    flex: none;
    height: 60px;
    padding-top: 5px;
}

.totals {
    display: flex;
    padding: 0 5px;
    height: 17px;
    line-height: 15px;
}

.totals label {
    flex: none;
    padding: 0 5px 0 2px;
    background: #3a3a3a;
    border: 1px solid #777;
    border-top-color: #111;
}

.totals input {
    min-width: 0;
    flex: 1;
    text-align: center;
    font-family: "Open Sans", sans-serif;
    background: #0a0c0e;
    color: #9cd8ea;
    border: 1px solid #555;
}

.totals .second {
    margin-left: 4px;
}

.gems .fold {
    margin-top: 2px;
}

.actions {
    display: flex;
    gap: 20px;
    margin-top: 3px;
    padding-left: 42px;
}

.actions button {
    display: flex;
    justify-content: space-between;
    width: 69px;
    height: 16px;
    padding-left: 2px;
    line-height: 15px;
    border-left: 1px solid #111;
}

.actions .save {
    width: 126px;
}

.gem-panel {
    flex: 1;
    margin: 0 6px 0 2px;
    padding: 6px 7px;
    background: #545454;
    border: 1px solid #6a6a6a;
    border-bottom: none;
}

.gem-block {
    display: flex;
    align-items: flex-start;
    margin-bottom: 3px;
}

.gem-pic {
    width: 36px;
    height: 33px;
    background: #2a2a2c;
    border: 1px solid #ddd;
}

.gem-table {
    width: 221px;
    table-layout: fixed;
    border-collapse: collapse;
    background: #363636;
    text-align: center;
}

.gem-table th, .gem-table td {
    height: 16px;
    font-weight: normal;
    line-height: 14px;
    border: 1px solid #8c8c8c;
}

.c-size {
    width: 119px;
}

.c-count {
    width: 35px;
}

.c-weight {
    width: 50px;
}

.c-go {
    width: 17px;
}

.gem-table .go {
    width: 16px;
    height: 15px;
}

/* main area */
.stage {
    display: flex;
    flex-direction: column;
    flex: 1;
    min-width: 0;
    border: 7px solid #adb0b1;
    border-left: 8px solid #b4b7b8;
    border-right-width: 8px;
    background: #add8e6;
}

.command {
    margin-top: 2px;
    padding: 0 1px 0 2px;
    flex: none;
    font-family: "Liberation Sans", Arial, sans-serif;
    font-size: 13px;
    color: #10303f;
}

.history {
    display: flex;
    justify-content: space-between;
    height: 43px;
    padding-left: 2px;
    line-height: 16px;
    background: #3cb8e0;
    border-left: 3px double #3a6a7c;
    border-bottom: 1px solid #14506a;
}

.history p {
    padding-top: 1px;
}

.scrollbar.short {
    width: 16px;
}

.prompt {
    display: flex;
    align-items: center;
    height: 19px;
    padding-left: 2px;
    background: #3cb8e0;
    border-left: 3px double #3a6a7c;
}

.prompt label {
    font-weight: bold;
}

.prompt input {
    flex: 1;
    height: 16px;
    margin-left: 4px;
    border-left: 1px solid #4a6f7e;
}

.spin {
    display: flex;
    flex-direction: column;
    width: 16px;
    height: 19px;
    gap: 1px;
    background: #f0f0f0;
}

.spin button {
    flex: 1;
    font-size: 6px;
    line-height: 6px;
    color: #000;
    border: 1px solid #aaa;
}

.tabs {
    display: flex;
    flex: none;
    padding: 7px 0 2px;
    font-family: "Open Sans", sans-serif;
    color: #1c2a33;
    border-bottom: 1px solid #1e3a46;
}

.tabs button {
    position: relative;
    z-index: 0;
    height: 19px;
    padding: 0 7px 0 11px;
    background: #2f4f5c;
    clip-path: polygon(0 100%, 0 8px, 8px 0, calc(100% - 3px) 0, 100% 3px, 100% 100%);
}

.tabs button::before {
    content: "";
    position: absolute;
    z-index: -1;
    top: 1px;
    right: 1px;
    bottom: 0;
    left: 1px;
    background: #d3e6ec;
    clip-path: polygon(0 100%, 0 8px, 8px 0, calc(100% - 3px) 0, 100% 3px, 100% 100%);
}

.tabs .active {
    margin-left: -8px;
    padding-left: 20px;
    clip-path: polygon(0 100%, 14px 0, calc(100% - 3px) 0, 100% 3px, 100% 100%);
}

.tabs .active::before {
    background: #3cb0d8;
    clip-path: polygon(0 100%, 14px 0, calc(100% - 3px) 0, 100% 3px, 100% 100%);
}

.tabs button:last-child::before {
    background: #b6dbe8;
}

.tabs svg {
    width: 10px;
    height: 10px;
    margin: 0 2px;
}

.viewport {
    position: relative;
    flex: 1;
    min-height: 0;
    background: #000;
}

.view-name {
    position: absolute;
    top: 0;
    left: 0;
    display: flex;
    height: 19px;
    padding-left: 9px;
    line-height: 18px;
    font-family: "Open Sans", sans-serif;
    background: #3cb0d8;
    color: #143440;
    border-bottom-right-radius: 3px;
}

.view-name span {
    width: 11px;
    height: 16px;
    margin-left: 8px;
    font-size: 9px;
    border-left: 1px solid #143440;
}

.scene {
    width: 100%;
    height: 100%;
}

.dim {
    font: 48px "Liberation Sans", Arial, sans-serif;
    fill: #fff;
}

.axis {
    font: 14px "Liberation Sans", Arial, sans-serif;
}

.axis-z {
    fill: #b98a5c;
}

.axis-y {
    fill: #3a8fb0;
}

/* taskbar */
.taskbar {
    display: flex;
    flex: none;
    height: 40px;
    background: #202024;
    font-family: "Open Sans", sans-serif;
    color: #eee;
}

.task {
    width: 49px;
}

.task svg {
    width: 24px;
    height: 24px;
    margin: 0 auto;
}

.task.active {
    background: #4a4b50;
    border-bottom: 2px solid #a8d8ee;
}

.tray {
    display: flex;
    align-items: center;
    margin-left: auto;
    padding-right: 18px;
}

.tray svg {
    width: 18px;
    height: 18px;
    margin-right: 6px;
}

.tray .people {
    width: 16px;
    height: 20px;
    margin: 0 84px 0 24px;
}

.tray .news {
    width: 24px;
    height: 20px;
    margin-right: 8px;
}

.tray .caret {
    width: 14px;
    height: 14px;
    margin: 0 8px 0 9px;
}

.tray .keys {
    width: 24px;
    height: 16px;
    margin: 0 8px 0 6px;
}

.tray .pen {
    margin-left: 4px;
}

.more {
    align-self: flex-start;
    margin-left: 8px;
    font-size: 14px;
    line-height: 18px;
}

.weather {
    margin-right: 9px;
    font-size: 13px;
}

.clock {
    text-align: center;
    line-height: 18px;
}

.notify {
    position: relative;
    margin-left: 14px;
}

.tray .notify svg {
    width: 24px;
    height: 28px;
    margin: 0;
}

.notify b {
    position: absolute;
    right: 5px;
    bottom: 2px;
    font-size: 10px;
    font-weight: normal;
}
```
FILE: script.js
```js
var groups = [
    [['Metal 01', '#007a4d', 1], ['Metal 02', '#4fc06a', 0], ['Metal 03', '#84f57c', 1], ['Metal 04', '#c2f7b6', 1]],
    [['User 01', '#ff0000', 1], ['User 02', '#00f000', 1], ['User 03', '#0000ff', 1], ['User 04', '#828282', 1]],
    [['Gem 01', '#003c9c', 1], ['Gem 02', '#3c78d4', 1], ['Gem 03', '#7cb0f8', 1], ['Gem 04', '#b4d2fc', 1]],
    [['Heads', '#7a1ca4', 1], ['Finger', '#a84038', 1], ['Cutting', '#f57c14', 1], ['Creation', '#fcbc28', 0]]
];

var metals = [
    ['Yellow Gold:9KY', '20.09', '12.92'],
    ['Yellow Gold:10KY', '20.76', '13.35'],
    ['Yellow Gold:14KY', '23.35', '15.02'],
    ['Yellow Gold:18KY', '27.94', '17.97'],
    ['Yellow Gold:18KY Royal', '27.94', '17.97'],
    ['Yellow Gold:22KY', '32.44', '20.86'],
    ['White Gold:9KW', '22.83', '14.68'],
    ['White Gold:10KX1', '20.27', '13.04'],
    ['White Gold:10KW', '19.93', '12.81'],
    ['White Gold:14KX1', '22.87', '14.7'],
    ['White Gold:14K PdW', '26.11', '16.79'],
    ['White Gold:14KW', '26.37', '16.94']
];

var rounds = [
    ['6.00 X 6.00', '1', '0.81tw'],
    ['1.30 X 1.30', '32', '0.26tw'],
    ['1.50 X 1.50', '24', '0.30tw'],
    ['1.70 X 1.70', '28', '0.52tw'],
    ['1.20 X 1.20', '8', '0.05tw']
];

var baguettes = [['2.00 X 1.50', '140', '4.27tw']];

function byId(id) {
    return document.getElementById(id);
}

function layerRow(l) {
    return '<div class="layer"><span class="name">' + l[0] + '</span>' +
        '<button aria-label="Open ' + l[0] + '"><svg><use href="#i-tri"/></svg></button>' +
        '<span class="swatch" style="background:' + l[1] + '"></span>' +
        '<button aria-label="Lock ' + l[0] + '"><svg><use href="#i-lock"/></svg></button>' +
        '<button class="toggle' + (l[2] ? '' : ' off') + '" aria-label="Toggle ' + l[0] + '">' + (l[2] ? 'I' : '○') + '</button></div>';
}

byId('lights').innerHTML = layerRow(['Lights', '#ffffff', 1]);
byId('layer-grid').innerHTML = groups.map(function (g) {
    return '<div class="layer-group"><div>' + g.map(layerRow).join('') + '</div><div class="bar"></div></div>';
}).join('');

byId('metal-rows').innerHTML = metals.map(function (m) {
    return '<tr><td>' + m.join('</td><td>') + '</td><td></td></tr>';
}).join('');

function gemRow(g) {
    return '<tr><td>' + g[0] + '</td><td>' + g[1] + '</td><td>' + g[2] + '</td>' +
        '<td><button class="go" aria-label="Select ' + g[0] + '"><svg><use href="#i-tri"/></svg></button></td></tr>';
}

byId('round-rows').innerHTML = rounds.map(gemRow).join('');
byId('baguette-rows').innerHTML = baguettes.map(gemRow).join('');

// ---- ring head ----
var DARK = '#007a4d';
var out = [];

function rect(x, y, w, h, fill, r, stroke) {
    out.push('<rect x="' + x + '" y="' + y + '" width="' + w + '" height="' + h + '" fill="' + fill + '"' +
        (r ? ' rx="' + r + '"' : '') + (stroke ? ' stroke="' + stroke + '" stroke-width="4"' : '') + '/>');
}

function path(d, fill, stroke, w) {
    out.push('<path d="' + d + '" fill="' + fill + '"' + (stroke ? ' stroke="' + stroke + '" stroke-width="' + (w || 4) + '"' : '') + '/>');
}

// two small claws side by side, with a window in each
function clawPair(x, y, win) {
    rect(x - 28, y - 17, 26, 36, '#0b8a55', 7, DARK);
    rect(x + 2, y - 17, 26, 36, '#0b8a55', 7, DARK);
    rect(x - 20, y - 8, 10, 17, win);
    rect(x + 10, y - 8, 10, 17, win);
}

function claw(x, y, dots) {
    rect(x - 22, y - 22, 44, 46, '#06834f', 12, DARK);
    if (dots) {
        [[-10, -10], [10, -10], [-10, 10], [10, 10]].forEach(function (p) {
            out.push('<circle cx="' + (x + p[0]) + '" cy="' + (y + p[1]) + '" r="3" fill="#52cf9a"/>');
        });
    }
}

// round stone seen from above: table in the middle, small facets round the rim
function stone(x, y, rx, ry, table) {
    var i, a, fx, fy;
    out.push('<ellipse cx="' + x + '" cy="' + y + '" rx="' + rx + '" ry="' + ry + '" fill="url(#stone)" stroke="#7ba5f2" stroke-width="6" stroke-dasharray="22 4"/>');
    for (i = 0; i < 8; i++) {
        a = i * Math.PI / 4;
        path('M' + x + ' ' + y + 'L' + Math.round(x + Math.cos(a) * rx * .7) + ' ' + Math.round(y + Math.sin(a) * ry * .7), 'none', '#94b9fa', 3);
    }
    for (i = 0; i < 11; i++) {
        a = i * Math.PI / 5.5 + .2;
        fx = Math.round(x + Math.cos(a) * rx * .82);
        fy = Math.round(y + Math.sin(a) * ry * .82);
        path('M' + (fx - 4) + ' ' + fy + 'l4 -5 5 3 -3 6z', Math.cos(a) > .3 ? '#24407c' : '#5578bc');
    }
    out.push('<ellipse cx="' + x + '" cy="' + y + '" rx="' + Math.round(rx * .44) + '" ry="' + Math.round(ry * .44) + '" fill="' + table + '"/>');
}

function blob(x, y, s) {
    s = Math.round(s * .85);
    path('M' + (x - s) + ' ' + (y - s / 2) + 'l' + s / 2 + ' ' + (-s / 2) + ' ' + s / 2 + ' ' + s / 4 + ' ' + s / 2 + ' ' + (-s / 4) + ' ' + s / 2 + ' ' + s / 2 +
        'v' + s + 'l' + (-s / 2) + ' ' + s / 2 + ' ' + (-s / 2) + ' ' + (-s / 4) + ' ' + (-s / 2) + ' ' + s / 4 + ' ' + (-s / 2) + ' ' + (-s / 2) + 'z', '#07824f', DARK, 3);
    rect(x - s / 3, y - s / 4, s / 5, s / 4, '#005a36');
    rect(x + s / 5, y - s / 3, s / 5, s / 4, '#0f9a63');
}

function shoulder(fill, line) {
    path('M198 370C175 480 135 560 110 670L88 700 90 745 76 780 84 815 74 860 88 890 90 930 128 970 125 1000 140 1040 150 1080 218 1168H345V370z', '#008250', '#006b43', 5);
    path('M200 400C182 490 162 540 146 600 108 700 112 840 160 930L205 900 215 560 230 420z', 'url(#' + fill + ')');
    path('M185 470C150 580 100 700 105 820M150 640C112 740 118 860 150 960M90 860C105 900 110 940 130 970M130 960C150 1040 180 1100 220 1160', 'none', '#00603d', 5);
    path('M195 480C165 570 130 680 124 790', 'none', line, 6);
    path('M200 372H318V520L205 500C190 470 200 420 200 372z', '#48c493', DARK);
    path('M210 470C215 420 235 390 260 378 290 390 312 420 316 480z', '#2ba676', DARK, 5);
}

shoulder('lit', '#8cf7d0');
out.push('<g transform="translate(1332 0) scale(-1 1)">');
shoulder('shade', '#2aa374');
out.push('</g>');

// posts and centre stone
rect(553, 130, 226, 170, '#22324a');
path('M553 205L558 140 565 131H768L775 140 779 205z', '#6a93dd');
path('M628 137L666 157 590 205 566 150zM704 137L666 157 742 205 770 150z', '#7099de');
path('M590 205L666 157 742 205z', '#5b83c8');
path('M553 250L600 300H553zM779 250L730 300H779z', '#101c30');
path('M553 137H779M566 150L628 137 666 157 704 137 770 150M666 132V300M555 205L566 150 590 205 666 157 742 205 766 150 779 205M590 205L635 300M598 215L622 300M742 205L697 300M734 215L710 300M553 250L600 300M779 250L732 300M555 280L575 300M777 280L757 300', 'none', '#8fb4fa', 4);
path('M550 206H782', 'none', '#9cc0ff', 10);
rect(455, 70, 98, 230, 'url(#post)');
rect(779, 70, 97, 230, 'url(#post)');
path('M455 71H553M779 71H876V300', 'none', '#2a9d70', 4);
rect(430, 302, 472, 45, '#38ab7e', 0, DARK);

// main plate
rect(235, 342, 860, 28, '#6c95de');
rect(200, 368, 932, 26, '#35a87b', 0, DARK);
rect(318, 392, 696, 772, '#34a57a', 0, DARK);

// top row of baguettes
[330, 472, 612, 755, 895].forEach(function (x) {
    rect(x - 10, 394, 130, 100, '#6d96de');
    rect(x - 8, 394, 126, 14, '#8bb4f8');
    rect(x, 412, 106, 64, '#a5d4ff');
    path('M' + x + ' 480H' + (x + 118) + 'V494H' + (x - 8) + 'z', '#4464a4');
    path('M' + (x + 109) + ' 410L' + (x + 116) + ' 402V486L' + (x + 109) + ' 476z', '#132d66');
});
path('M318 518H1015', 'none', DARK, 6);

// lower block, six columns by four rows
rect(330, 545, 672, 565, '#6591da');
[[545, 110, '#8bb6ff', '#5a7cc0'], [690, 105, '#9fd0ff', '#5a7cc0'], [840, 104, '#ccffff', '#41629e'], [990, 110, '#f2ffff', '#2a4a88']].forEach(function (r) {
    var c, x;
    for (c = 0; c < 6; c++) {
        x = 346 + c * 112;
        rect(x - 13, r[0], 15, r[1] + 16, '#78a4ee');
        rect(x + 2, r[0], 10, r[1] + 6, '#6f95da');
        rect(x + 12, r[0], 61, r[1], r[2]);
        rect(x + 76, r[0] - 2, 11, r[1] + 16, '#3a5890');
        rect(x, r[0] + r[1], 80, 14, r[3]);
        if (c < 5) {
            path('M' + (x + 94) + ' ' + r[0] + 'v' + (r[1] + 14), 'none', '#2a5a80', 3);
            path('M' + (x + 99) + ' ' + r[0] + 'v' + (r[1] + 14), 'none', '#62b8c8', 4);
        }
    }
});
[[677, '#6f9fe0', '#2f8f8f'], [822, '#5ba6b8', '#237f7c'], [972, '#6cc6c6', '#1f8c78'], [1122, '#63d8ac', DARK]].forEach(function (b) {
    rect(330, b[0] - 6, 672, 20, b[1]);
    path('M330 ' + (b[0] + 2) + 'H1002', 'none', b[2], 4);
});
rect(340, 1140, 650, 26, '#64deac', 0, DARK);

// claws
[328, 440, 592, 740, 892, 1003].forEach(function (x) {
    rect(x - 32, 320, 30, 56, '#06834f', 6, DARK);
    rect(x + 2, 320, 30, 56, '#06834f', 6, DARK);
    rect(x - 20, 340, 40, 36, '#06834f');
});
rect(199, 320, 36, 52, '#14935f', 6, DARK);
rect(1096, 320, 36, 52, '#14935f', 6, DARK);
[520, 634, 670, 780].forEach(function (x) {
    path('M' + x + ' 342V326h28v16M' + (x + 8) + ' 342v-8h12v8', 'none', DARK, 5);
});
[455, 595, 737, 877].forEach(function (x) {
    clawPair(x, 380, '#72e6b4');
    clawPair(x, 502, '#2fa878');
});
clawPair(324, 380, '#72e6b4');
clawPair(1006, 380, '#72e6b4');
[440, 552, 664, 778, 890].forEach(function (x) {
    clawPair(x, 532, '#3db586');
    claw(x, 670);
    claw(x, 818, true);
    claw(x, 965, true);
    clawPair(x, 1117, '#66e0ae');
});

// green rails under the side stones
path('M318 500L326 560 318 900 345 1168 225 1166 300 1050 290 800 300 560z', '#00804f');
path('M1014 500L1006 560 1014 900 987 1168 1107 1166 1032 1050 1042 800 1032 560z', '#00804f');

[335, 997].forEach(function (x) {
    [502, 532, 660, 812, 962, 1117].forEach(function (y) {
        rect(x - 14, y - 17, 28, 40, '#0b8a55', 6, DARK);
        rect(x - 5, y - 8, 5, 18, '#3db586');
        rect(x + 4, y - 8, 4, 18, '#3db586');
    });
});

// side stones
var stones = [
    [210, 562, 28, 38, '#6f98e4'], [198, 650, 28, 38, '#6f98e4'], [182, 745, 24, 38, '#5a7cba'], [176, 858, 25, 42, '#5a7cba'], [182, 995, 24, 42, '#5a7cba'], [217, 1110, 22, 34, '#5a7cba'],
    [255, 470, 56, 48, '#7fa8f0'], [276, 565, 36, 40, '#46659e'], [270, 650, 38, 40, '#46659e'], [262, 742, 44, 48, '#506f9f'], [260, 853, 54, 54, '#6184c2'], [263, 977, 54, 54, '#678dd0'], [268, 1093, 54, 50, '#6184c2'],
    [1122, 565, 28, 38, '#24417c'], [1134, 648, 26, 40, '#1d3a78'], [1150, 742, 24, 44, '#122a5c'], [1160, 860, 20, 46, '#16306a'], [1150, 995, 20, 42, '#233f7c'], [1122, 1112, 20, 38, '#233f7c'],
    [1077, 468, 55, 48, '#7fa8f0'], [1058, 568, 38, 40, '#7ba4ec'], [1066, 650, 40, 42, '#7ba4ec'], [1074, 745, 46, 48, '#76a0e8'], [1072, 853, 54, 54, '#a9d8fc'], [1069, 977, 54, 54, '#ffffff'], [1058, 1093, 52, 50, '#6184c2']
];

// clusters of claws between the stones: [x, y, size]
var blobs = [
    [262, 405, 22], [188, 505, 20], [240, 520, 20], [300, 510, 18], [232, 590, 26], [176, 605, 18], [212, 678, 22], [300, 700, 18], [168, 692, 14], [195, 795, 24], [300, 795, 18],
    [190, 925, 26], [300, 915, 20], [208, 1060, 28], [300, 1035, 16], [245, 1158, 18], [310, 1150, 20],
    [1074, 405, 22], [1085, 515, 20], [1140, 505, 18], [1098, 588, 26], [1160, 610, 18], [1105, 675, 22], [1035, 700, 16], [1132, 790, 26], [1035, 795, 16], [1135, 925, 28], [1032, 915, 18],
    [1130, 1055, 28], [1035, 1035, 16], [1090, 1156, 18], [1022, 1150, 20]
];

stones.forEach(function (s) {
    stone(s[0], s[1], s[2], s[3], s[4]);
});
[[232, 742], [218, 855], [222, 965], [1084, 648], [1100, 745], [210, 565], [245, 645]].forEach(function (p) {
    path('M' + p[0] + ' ' + (p[1] - 9) + 'l3 6 7 3 -7 3 -3 7 -3 -7 -7 -3 7 -3z', '#e8f8ff');
});
blobs.forEach(function (b) {
    blob(b[0], b[1], b[2]);
});

byId('ring').innerHTML = out.join('');
```
